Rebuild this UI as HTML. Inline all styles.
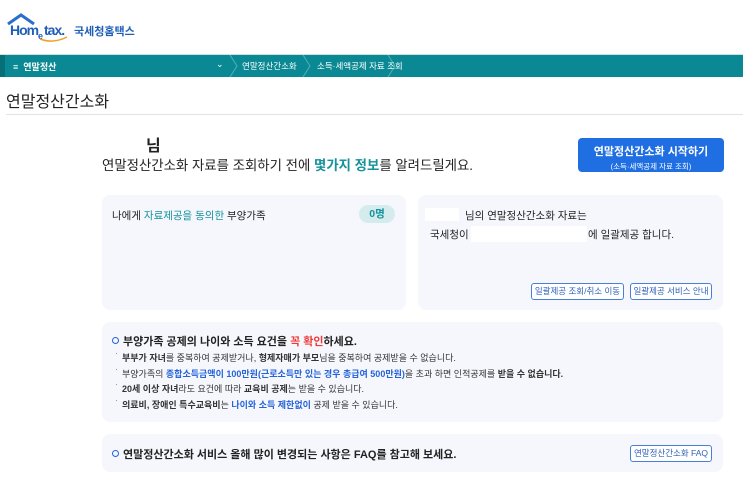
<!DOCTYPE html>
<html><head><meta charset="utf-8"><style>
*{margin:0;padding:0;box-sizing:border-box}
body{width:743px;height:481px;background:#fff;font-family:"Liberation Sans","Noto Sans CJK KR",sans-serif;position:relative;overflow:hidden;color:#222}
.a{position:absolute}
.card{position:absolute;background:#f5f7fc;border-radius:8px}
.btn{position:absolute;border:1px solid #4a7fd8;border-radius:3px;background:#fff;color:#2f5fb8;font-size:8.5px;text-align:center;line-height:15px}
.teal{color:#15929a}.blue{color:#2563d8}
.ring{display:inline-block;width:7px;height:7px;border:1.5px solid #2563d8;border-radius:50%;margin-right:4px;vertical-align:1px}
li{list-style:none;font-size:9px;color:#333;height:15.5px;position:relative;padding-left:7px}
li:before{content:"·";position:absolute;left:0;top:-3px;color:#888}
</style></head><body>
<svg class="a" style="left:7px;top:12px" width="70" height="30" viewBox="0 0 70 30">
<path d="M1 12 L14 3 L27 12" stroke="#2a6fc9" stroke-width="3" fill="none"/>
<text x="3" y="23" font-family="Liberation Sans" font-weight="bold" font-size="14" letter-spacing="-1" fill="#1f5fb8">Hom</text>
<text x="31" y="27" font-family="Liberation Sans" font-weight="bold" font-size="9" fill="#1f5fb8">e</text>
<text x="37" y="23" font-family="Liberation Sans" font-weight="bold" font-size="14" letter-spacing="-1" fill="#1f5fb8">tax.</text>
<path d="M33 27 Q46 32 60 25" stroke="#f0a020" stroke-width="1.5" fill="none"/>
</svg>
<div class="a" style="left:74px;top:23px;font-size:11px;color:#1f5fb8;font-weight:bold">국세청홈택스</div>
<div class="a" style="left:0;top:54px;width:743px;height:23px;background:#0a8893;border-top:1px solid #cfe0e2"></div>
<div class="a" style="left:0;top:55px;width:5px;height:22px;background:#066f78"></div>
<div class="a" style="left:13px;top:60px;font-size:9px;color:#fff;font-weight:bold">≡ &nbsp;연말정산</div>
<div class="a" style="left:216px;top:59px;font-size:9px;color:#fff">⌄</div>
<svg class="a" style="left:228px;top:55px" width="200" height="22"><path d="M2 0 L9 11 L2 22 M160 0 L167 11 L160 22" stroke="#4fb1b9" fill="none"/><path d="M75 0 L82 11 L75 22" stroke="#4fb1b9" fill="none"/></svg>
<div class="a" style="left:242px;top:60px;font-size:8.5px;color:#fff">연말정산간소화</div>
<div class="a" style="left:317px;top:60px;font-size:8.5px;color:#fff">소득·세액공제 자료 조회</div>
<div class="a" style="left:6px;top:88px;font-size:16px;color:#222">연말정산간소화</div>
<div class="a" style="left:6px;top:114px;width:737px;height:1px;background:#e3e3e3"></div>
<div class="a" style="left:146px;top:132px;font-size:16px;font-weight:bold">님</div>
<div class="a" style="left:102px;top:154px;font-size:13.4px">연말정산간소화 자료를 조회하기 전에 <b class="teal">몇가지 정보</b>를 알려드릴게요.</div>
<div class="a" style="left:578px;top:138px;width:146px;height:34px;background:#1f6fe3;border-radius:4px;color:#fff;text-align:center">
<div style="font-size:11px;font-weight:bold;margin-top:5px">연말정산간소화 시작하기</div><div style="font-size:7.5px;margin-top:2px">(소득·세액공제 자료 조회)</div></div>
<div class="card" style="left:102px;top:195px;width:304px;height:115px"></div>
<div class="a" style="left:112px;top:208px;font-size:10.5px">나에게 <span class="teal">자료제공을 동의한</span> 부양가족</div>
<div class="a" style="left:359px;top:205px;width:36px;height:18px;background:#d5ecee;border-radius:9px;font-size:10.5px;font-weight:bold;color:#15929a;text-align:center;line-height:18px">0명</div>
<div class="card" style="left:418px;top:195px;width:305px;height:115px"></div>
<div class="a" style="left:425px;top:208px;width:34px;height:13px;background:#fff"></div>
<div class="a" style="left:465px;top:208px;font-size:10.5px">님의 연말정산간소화 자료는</div>
<div class="a" style="left:430px;top:227px;font-size:10.5px">국세청이</div>
<div class="a" style="left:471px;top:226px;width:116px;height:16px;background:#fff"></div>
<div class="a" style="left:588px;top:227px;font-size:10.5px">에 일괄제공 합니다.</div>
<div class="btn" style="left:531px;top:283px;width:93px;height:17px">일괄제공 조회/취소 이동</div>
<div class="btn" style="left:630px;top:283px;width:82px;height:17px">일괄제공 서비스 안내</div>
<div class="card" style="left:102px;top:322px;width:621px;height:100px"></div>
<div class="a" style="left:112px;top:333px;font-size:11px;font-weight:bold"><span class="ring"></span>부양가족 공제의 나이와 소득 요건을 <span style="color:#f03a3a">꼭 확인</span>하세요.</div>
<ul class="a" style="left:115px;top:351px">
<li><b>부부가 자녀</b>를 중복하여 공제받거나, <b>형제자매가 부모</b>님을 중복하여 공제받을 수 없습니다.</li>
<li>부양가족의 <b class="blue">종합소득금액이 100만원(근로소득만 있는 경우 총급여 500만원)</b>을 초과 하면 인적공제를 <b>받을 수 없습니다.</b></li>
<li><b>20세 이상 자녀</b>라도 요건에 따라 <b>교육비 공제</b>는 받을 수 있습니다.</li>
<li><b>의료비, 장애인 특수교육비</b>는 <b class="blue">나이와 소득 제한없이</b> 공제 받을 수 있습니다.</li>
</ul>
<div class="card" style="left:102px;top:434px;width:621px;height:38px"></div>
<div class="a" style="left:112px;top:446px;font-size:11px;font-weight:bold"><span class="ring"></span>연말정산간소화 서비스 올해 많이 변경되는 사항은 FAQ를 참고해 보세요.</div>
<div class="btn" style="left:630px;top:445px;width:82px;height:17px">연말정산간소화 FAQ</div>
</body></html>
